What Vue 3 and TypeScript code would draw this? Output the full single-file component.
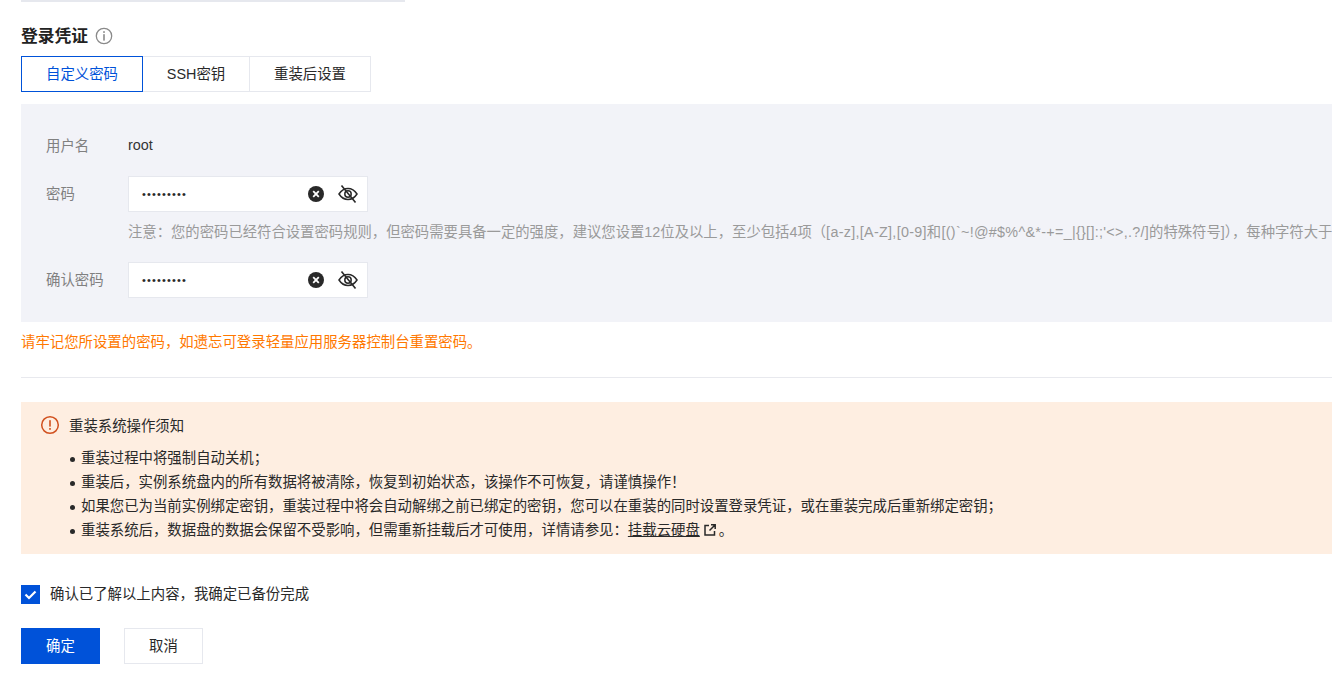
<template>
  <div class="page">
    <div class="top-strip"></div>

    <div class="section-title">
      <span>登录凭证</span>
      <svg class="info-icon" viewBox="0 0 18 18" width="18" height="18">
        <circle cx="9" cy="9" r="7.7" fill="none" stroke="#8a8a8a" stroke-width="1.3" />
        <rect x="8.2" y="4.2" width="1.6" height="1.7" fill="#8a8a8a" />
        <rect x="8.2" y="7.2" width="1.6" height="6.4" fill="#8a8a8a" />
      </svg>
    </div>

    <div class="tabs">
      <button
        v-for="tab in tabs"
        :key="tab"
        class="tab"
        :class="{ active: tab === activeTab }"
        @click="activeTab = tab"
      >
        {{ tab }}
      </button>
    </div>

    <div class="panel">
      <div class="row row-user">
        <span class="label">用户名</span>
        <span class="value">root</span>
      </div>

      <div class="row">
        <span class="label">密码</span>
        <div class="field">
          <span class="dots">•••••••••</span>
          <svg viewBox="0 0 18 18" width="18" height="18">
            <circle cx="9" cy="9" r="8" fill="#292929" />
            <path d="M6.2 6.2l5.6 5.6M11.8 6.2l-5.6 5.6" stroke="#fff" stroke-width="1.8" fill="none" />
          </svg>
          <svg class="eye-icon" viewBox="0 0 20 20" width="20" height="20">
            <path d="M1 10c2.4-3.7 5.4-5.5 9-5.5s6.6 1.8 9 5.5c-2.4 3.7-5.4 5.5-9 5.5s-6.6-1.8-9-5.5z" fill="none" stroke="#292929" stroke-width="1.5" />
            <circle cx="10" cy="10" r="3.2" fill="none" stroke="#292929" stroke-width="1.5" />
            <path d="M3.5 1.5l14 17" stroke="#292929" stroke-width="1.6" fill="none" />
          </svg>
        </div>
      </div>
      <p class="hint">{{ hintStart }}<span class="hint-symbols">{{ hintSymbols }}</span>{{ hintEnd }}</p>

      <div class="row">
        <span class="label">确认密码</span>
        <div class="field">
          <span class="dots">•••••••••</span>
          <svg viewBox="0 0 18 18" width="18" height="18">
            <circle cx="9" cy="9" r="8" fill="#292929" />
            <path d="M6.2 6.2l5.6 5.6M11.8 6.2l-5.6 5.6" stroke="#fff" stroke-width="1.8" fill="none" />
          </svg>
          <svg class="eye-icon" viewBox="0 0 20 20" width="20" height="20">
            <path d="M1 10c2.4-3.7 5.4-5.5 9-5.5s6.6 1.8 9 5.5c-2.4 3.7-5.4 5.5-9 5.5s-6.6-1.8-9-5.5z" fill="none" stroke="#292929" stroke-width="1.5" />
            <circle cx="10" cy="10" r="3.2" fill="none" stroke="#292929" stroke-width="1.5" />
            <path d="M3.5 1.5l14 17" stroke="#292929" stroke-width="1.6" fill="none" />
          </svg>
        </div>
      </div>
    </div>

    <p class="warn-text">请牢记您所设置的密码，如遗忘可登录轻量应用服务器控制台重置密码。</p>

    <div class="divider"></div>

    <div class="notice">
      <div class="notice-head">
        <svg viewBox="0 0 20 20" width="20" height="20">
          <circle cx="10" cy="10" r="8.3" fill="none" stroke="#d1511f" stroke-width="1.5" />
          <rect x="9.2" y="5.2" width="1.6" height="6.4" fill="#d1511f" />
          <rect x="9.2" y="13" width="1.6" height="1.8" fill="#d1511f" />
        </svg>
        <span>重装系统操作须知</span>
      </div>
      <ul class="notice-list">
        <li>重装过程中将强制自动关机；</li>
        <li>重装后，实例系统盘内的所有数据将被清除，恢复到初始状态，该操作不可恢复，请谨慎操作！</li>
        <li>如果您已为当前实例绑定密钥，重装过程中将会自动解绑之前已绑定的密钥，您可以在重装的同时设置登录凭证，或在重装完成后重新绑定密钥；</li>
        <li>重装系统后，数据盘的数据会保留不受影响，但需重新挂载后才可使用，详情请参见：<a class="doc-link">挂载云硬盘</a><svg class="link-icon" viewBox="0 0 14 14" width="14" height="14">
            <path d="M6 2.5H2V12h9.5V8M8 1.8h4.2V6M12 2L6.5 7.5" fill="none" stroke="#292929" stroke-width="1.5" />
          </svg>。</li>
      </ul>
    </div>

    <label class="confirm">
      <span class="checkbox">
        <svg viewBox="0 0 19 19" width="19" height="19">
          <path d="M4.5 9.5l3.5 3.5 6.5-6.5" fill="none" stroke="#fff" stroke-width="2.2" />
        </svg>
      </span>
      <span>确认已了解以上内容，我确定已备份完成</span>
    </label>

    <div class="actions">
      <button class="btn primary">确定</button>
      <button class="btn">取消</button>
    </div>
  </div>
</template>

<script setup lang="ts">
import { ref } from 'vue';

const tabs = ['自定义密码', 'SSH密钥', '重装后设置'];
const activeTab = ref('自定义密码');

const hintStart = '注意：您的密码已经符合设置密码规则，但密码需要具备一定的强度，建议您设置12位及以上，至少包括4项（';
const hintSymbols = "[a-z],[A-Z],[0-9]和[()`~!@#$%^&*-+=_|{}[]:;'<>,.?/]";
const hintEnd = '的特殊符号]），每种字符大于等于2位';
</script>

<style>
html,
body {
  margin: 0;
  overflow: hidden;
}
</style>

<style scoped>
.page {
  width: 1332px;
  height: 676px;
  overflow: hidden;
  box-sizing: border-box;
  padding-left: 21px;
  font-family: "Liberation Sans", "Noto Sans CJK SC", sans-serif;
  font-size: 14.4px;
  color: #292929;
  background: #fff;
}

.top-strip {
  width: 384px;
  height: 2px;
  background: #e6e8ee;
}

.section-title {
  display: flex;
  align-items: center;
  gap: 7px;
  height: 22px;
  margin-top: 23px;
  font-size: 16.8px;
  font-weight: 700;
  line-height: 20px;
  color: #222;
}

.section-title span {
  margin-top: 2px;
}

.tabs {
  display: flex;
  margin-top: 9px;
}

.tab {
  height: 36px;
  padding: 0 0 4px;
  margin-left: -1px;
  border: 1px solid #e6e8ee;
  background: #fff;
  font: inherit;
  color: #292929;
  width: 122px;
}

.tab:first-child {
  margin-left: 0;
}

.tab:nth-child(2) {
  width: 108px;
}

.tab.active {
  border-color: #0052d9;
  color: #0052d9;
  position: relative;
}

.panel {
  margin-top: 12px;
  height: 218px;
  box-sizing: border-box;
  padding: 24px 25px 0;
  background: #f2f3f8;
}

.row {
  display: flex;
  align-items: center;
  height: 36px;
}

.row-user {
  height: 34px;
  margin-bottom: 14px;
}

.label {
  width: 82px;
  flex: none;
  margin-top: -4px;
  color: #808080;
}

.row-user .label {
  margin-top: -2px;
}

.value {
  color: #333;
}

.field {
  display: flex;
  align-items: center;
  width: 240px;
  height: 36px;
  box-sizing: border-box;
  padding: 0 9px 0 13px;
  background: #fff;
  border: 1px solid #e6e8ee;
}

.dots {
  flex: 1;
  font-size: 11px;
  letter-spacing: 1.15px;
}

.eye-icon {
  margin-left: 13px;
}

.hint {
  margin: 10px 0 20px 82px;
  line-height: 20px;
  height: 20px;
  font-size: 14.35px;
  color: #9a9a9a;
  white-space: nowrap;
}

.hint-symbols {
  letter-spacing: 0.3px;
}

.warn-text {
  margin: 11px 0 0;
  line-height: 18px;
  color: #ff7800;
}

.divider {
  height: 1px;
  margin-top: 26px;
  background: #e8e9ee;
}

.notice {
  height: 152px;
  margin-top: 24px;
  box-sizing: border-box;
  padding: 13px 20px 0 19px;
  background: #feeee1;
}

.notice-head {
  display: flex;
  align-items: center;
  gap: 9px;
  height: 20px;
}

.notice-head span {
  margin-top: -2px;
}

.notice-list {
  margin: 11px 0 0;
  padding: 0 0 0 30px;
  list-style: none;
}

.notice-list li {
  line-height: 24px;
  white-space: nowrap;
}

.notice-list li::before {
  content: "";
  display: inline-block;
  width: 5px;
  height: 5px;
  margin-right: 6px;
  border-radius: 50%;
  background: #292929;
  vertical-align: middle;
}

.doc-link {
  text-decoration: underline;
  color: #292929;
}

.link-icon {
  margin: 0 2px 0 3px;
  vertical-align: -2px;
}

.confirm {
  display: flex;
  align-items: center;
  gap: 10px;
  margin-top: 31px;
  height: 19px;
  line-height: 17px;
}

.checkbox {
  display: block;
  width: 19px;
  height: 19px;
  background: #0052d9;
}

.checkbox svg {
  display: block;
}

.actions {
  display: flex;
  gap: 24px;
  margin-top: 24px;
}

.btn {
  width: 79px;
  height: 36px;
  padding: 0 0 4px;
  border: 1px solid #e6e8ee;
  background: #fff;
  font: inherit;
  color: #292929;
}

.btn.primary {
  border-color: #0052d9;
  background: #0052d9;
  color: #fff;
}
</style>
